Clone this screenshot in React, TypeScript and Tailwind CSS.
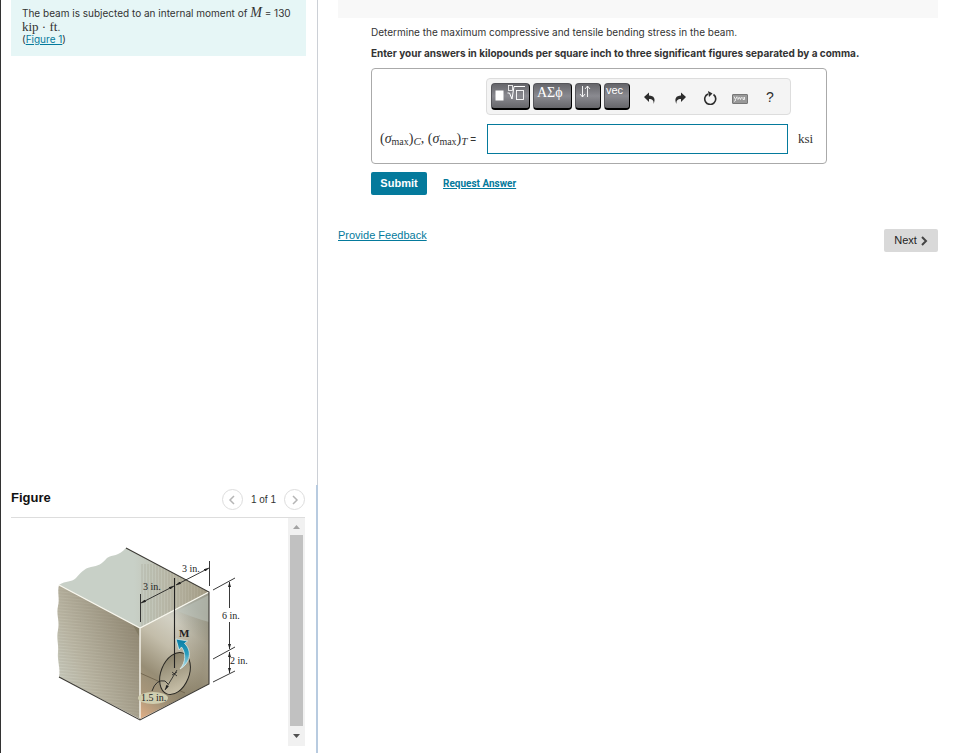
import React from 'react';

const keyClass =
  'flex h-[27px] items-start justify-start rounded-[4px] border border-[#55555a] border-r-black border-b-2 border-b-black bg-linear-to-b from-[#66666b] via-[#8a8a90] to-[#66666a] text-white overflow-hidden';

const toolClass = 'flex h-[30px] w-[30px] items-center justify-center text-[#2d2d2d]';

const BeamFigure = () => (
  <svg
    viewBox="46 540 214 190"
    className="h-[190px] w-[214px]"
    role="img"
    aria-label="Beam cross section"
    fontFamily="'Liberation Serif', serif"
    fontSize="10"
    fill="#222"
  >
    <defs>
      <linearGradient id="side" x1="0" y1="1" x2="1" y2="0.3">
        <stop offset="0" stopColor="#d3d9d0" />
        <stop offset="0.4" stopColor="#bdb9a7" />
        <stop offset="1" stopColor="#918873" />
      </linearGradient>
      <linearGradient id="front" x1="0.1" y1="1" x2="0.5" y2="0">
        <stop offset="0" stopColor="#d9ab84" />
        <stop offset="0.16" stopColor="#a8967a" />
        <stop offset="0.34" stopColor="#978d75" />
        <stop offset="0.6" stopColor="#c3bdaa" />
        <stop offset="0.8" stopColor="#d2d0c3" />
        <stop offset="1" stopColor="#b4bab2" />
      </linearGradient>
      <linearGradient id="frontShade" x1="0" y1="0" x2="1" y2="0.3">
        <stop offset="0.5" stopColor="#746a51" stopOpacity="0" />
        <stop offset="1" stopColor="#746a51" stopOpacity="0.5" />
      </linearGradient>
      <linearGradient id="top" x1="0" y1="0" x2="1" y2="0">
        <stop offset="0.5" stopColor="#c8d0c7" />
        <stop offset="0.78" stopColor="#bbb9a8" />
        <stop offset="1" stopColor="#a69e87" />
      </linearGradient>
      <linearGradient id="hole" x1="0" y1="0" x2="0.6" y2="1">
        <stop offset="0" stopColor="#7d765f" />
        <stop offset="1" stopColor="#c8c0a9" />
      </linearGradient>
      <linearGradient id="moment" x1="0" y1="0" x2="0" y2="1">
        <stop offset="0" stopColor="#087ba3" />
        <stop offset="0.5" stopColor="#2a9dbd" />
        <stop offset="1" stopColor="#c8e8ec" />
      </linearGradient>
      <pattern id="grain" width="8" height="3" patternUnits="userSpaceOnUse" patternTransform="rotate(5)">
        <path d="M0 1h8" stroke="#6f684f" strokeWidth="0.6" opacity="0.35" />
      </pattern>
      <pattern id="lines" width="3" height="8" patternUnits="userSpaceOnUse">
        <path d="M1 0v8" stroke="#7b745b" strokeWidth="0.6" opacity="0.4" />
      </pattern>
      <marker id="arrow" markerWidth="5" markerHeight="3" refX="5" refY="1.5" orient="auto-start-reverse" markerUnits="userSpaceOnUse">
        <path d="M0 0l5 1.500-5 1.500z" fill="#222" />
      </marker>
    </defs>

    {/* top face with the broken back edge */}
    <path
      d="M59 585C66 580 71 583 76 578C83 570 86 568 91 567C98 566 102 564 107 558C113 554 118 557 126 548L209 592L140 628Z"
      fill="url(#top)"
    />
    <path d="M140 564L157 564L209 592L140 628Z" fill="url(#lines)" />
    {/* side face */}
    <path d="M59 585C57 592 60 599 58 606C56 615 60 621 58 630C56 638 59 645 58 652C57 661 61 669 59 677L140 719V628Z" fill="url(#side)" />
    <path d="M59 585C57 592 60 599 58 606C56 615 60 621 58 630L59 677L140 719V628Z" fill="url(#grain)" />
    <path d="M133 625L140 638V628Z" fill="#827b64" />
    {/* front face */}
    <path d="M140 628L209 592V684L140 719Z" fill="url(#front)" />
    <path d="M140 628L209 592V684L140 719Z" fill="url(#frontShade)" />
    <path d="M177 611L209 595V622Q194 618 177 611" fill="#bdc5be" opacity="0.5" />
    <path d="M140 673L185 693" stroke="#6b6049" strokeWidth="0.8" fill="none" />
    <path d="M59 585L140 628L209 592M140 628V718" stroke="#f8f7ee" strokeWidth="1.4" fill="none" />
    <path d="M59 677L140 720L209 684V592L126 548" stroke="#3c3a35" strokeWidth="1.1" fill="none" />

    {/* hole */}
    <ellipse cx="175" cy="673.5" rx="14" ry="22" transform="rotate(22 175 673.5)" fill="url(#hole)" stroke="#292823" strokeWidth="1" />
    <path d="M174.500 578V668" stroke="#222" strokeWidth="1.1" />
    <path d="M165 690L177 670" stroke="#222" strokeWidth="0.8" markerStart="url(#arrow)" />
    <path d="M172 672l5 4M172 675l5-3" stroke="#222" strokeWidth="0.8" />
    <ellipse cx="153" cy="698" rx="15" ry="6" fill="#d0ceb0" />
    <path d="M152 691Q156 679 165 681L168 684" stroke="#222" strokeWidth="0.9" fill="none" />

    {/* dimensions */}
    <g stroke="#222" strokeWidth="0.9" fill="none">
      <path d="M140.500 594V622M209.500 561V586" />
      <path d="M141 603L174 586" markerStart="url(#arrow)" markerEnd="url(#arrow)" />
      <path d="M176 585L209 568" markerStart="url(#arrow)" markerEnd="url(#arrow)" />
      <path d="M213 590L235 578M213 659L235 647M213 682L235 671" />
      <path d="M229.500 608V582" markerEnd="url(#arrow)" />
      <path d="M229.500 622V649" markerEnd="url(#arrow)" />
      <path d="M229.500 652V673" markerStart="url(#arrow)" markerEnd="url(#arrow)" />
    </g>
    <path
      d="M180 669C191 663 192 650 184.500 643.500L187.500 641L176 639L179 650L181.500 647C186 653 186 662 180 669Z"
      fill="url(#moment)"
      stroke="#e5f1ef"
      strokeWidth="0.7"
    />
    <text x="143" y="590">3 in.</text>
    <text x="182" y="572">3 in.</text>
    <text x="222" y="619">6 in.</text>
    <text x="230" y="664">2 in.</text>
    <text x="141" y="701">1.5 in.</text>
    <text x="179" y="637" fontSize="11" fontWeight="bold">M</text>
  </svg>
);

const ProblemPanel = () => (
  <aside className="flex w-[318px] shrink-0 flex-col border-l border-[#333]">
    <section className="flex-1 border-r border-[#ccd0d6] pl-[10px] pr-[11px]">
      <div className="h-[56px] bg-[#e6f6f6] px-[11px] pt-[6px] font-['Inter',sans-serif] text-[10px] leading-[12px] text-[#333]">
        <p>
          The beam is subjected to an internal moment of{' '}
          <i className="font-['Liberation_Serif',serif] text-[14px] leading-none">M</i> = 130
        </p>
        <p>
          <span className="font-['Liberation_Serif',serif] text-[13px] leading-none">kip · ft</span>.
        </p>
        <p>
          (<a href="#figure" className="text-[#047a9c] underline">Figure 1</a>)
        </p>
      </div>
    </section>

    <section id="figure" className="border-r-2 border-[#b8cbe0] pb-[7px] pl-[10px] pr-[11px]">
      <header className="flex h-[33px] items-start justify-between border-b border-[#ddd] pt-[4px]">
        <h2 className="text-[13px] font-bold leading-[18px] text-[#111]">Figure</h2>
        <div className="flex items-center gap-[8px] text-[10px] text-[#333]">
          <button aria-label="Previous figure" className="flex size-[21px] items-center justify-center rounded-full border border-[#ddd]">
            <svg viewBox="0 0 10 10" className="size-[10px]" fill="none" stroke="#b5b5b5" strokeWidth="1.5"><path d="M7 1L3 5l4 4" /></svg>
          </button>
          <span>1 of 1</span>
          <button aria-label="Next figure" className="flex size-[21px] items-center justify-center rounded-full border border-[#ddd]">
            <svg viewBox="0 0 10 10" className="size-[10px]" fill="none" stroke="#b5b5b5" strokeWidth="1.5"><path d="M3 1l4 4-4 4" /></svg>
          </button>
        </div>
      </header>
      <div className="flex h-[228px] justify-between">
        <div className="pl-[35px] pt-[22px]">
          <BeamFigure />
        </div>
        <div className="flex w-[17px] shrink-0 flex-col items-center bg-[#f1f1f1]">
          <button aria-label="Scroll up" className="flex h-[17px] w-full items-center justify-center">
            <svg viewBox="0 0 7 4" className="h-[4px] w-[7px]" fill="#a3a3a3"><path d="M0 4l3.500-4L7 4z" /></svg>
          </button>
          <div className="w-[13px] flex-1 bg-[#c1c1c1]" />
          <button aria-label="Scroll down" className="flex h-[20px] w-full items-center justify-center">
            <svg viewBox="0 0 7 4" className="h-[4px] w-[7px]" fill="#505050"><path d="M0 0h7L3.500 4z" /></svg>
          </button>
        </div>
      </div>
    </section>
  </aside>
);

const Toolbar = () => (
  <div className="flex h-[37px] items-center gap-[3px] rounded-[4px] border border-[#ddd] bg-[#f4f4f4] pl-[4px]">
    <button aria-label="Templates" className={`${keyClass} w-[39px]`}>
      <svg viewBox="0 0 37 24" className="h-[24px] w-[37px]" fill="none" stroke="#fff">
        <rect x="4" y="7" width="7" height="9" fill="#fff" />
        <path d="M15.500 9l2 0 2.500 6L22 2.500H33" />
        <rect x="16.500" y="1.500" width="4" height="5" strokeWidth="0.8" />
        <rect x="24.500" y="6.500" width="7" height="9" strokeWidth="0.9" />
      </svg>
    </button>
    <button className={`${keyClass} w-[39px] pl-[3px] font-['Liberation_Serif',serif] text-[14px] leading-[17px]`}>ΑΣϕ</button>
    <button aria-label="Arrows" className={`${keyClass} w-[26px]`}>
      <svg viewBox="0 0 24 24" className="size-[24px]" fill="none" stroke="#fff" strokeWidth="0.9">
        <path d="M6.500 2v11M4 10l2.500 3L9 10M11.500 13V2M9 5l2.500-3L14 5" />
      </svg>
    </button>
    <button className={`${keyClass} w-[26px] pl-px text-[11px] leading-[13px]`}>vec</button>
    <div className="flex pl-[2px] pt-[2px]">
      <button aria-label="Undo" className={toolClass}>
        <svg viewBox="0 0 12 12" className="size-[12px]" fill="currentColor"><path d="M0 5L5 .5V3.500C10 3.500 12 7 9.500 12C10 8.500 8.500 7 5 7v3z" /></svg>
      </button>
      <button aria-label="Redo" className={toolClass}>
        <svg viewBox="0 0 12 12" className="size-[12px]" fill="currentColor"><path d="M12 5L7 .5V3.500C2 3.500 0 7 2.500 12C2 8.500 3.500 7 7 7v3z" /></svg>
      </button>
      <button aria-label="Reset" className={toolClass}>
        <svg viewBox="0 0 14 14" className="size-[14px]" fill="none" stroke="currentColor" strokeWidth="1.6">
          <path d="M10.500 3.500A5.500 5.500 0 1 1 5 2.900" />
          <path d="M5 0l4.500 2.500L6 6z" fill="currentColor" stroke="none" />
        </svg>
      </button>
      <button aria-label="Keyboard shortcuts" className={toolClass}>
        <svg viewBox="0 0 16 10" className="mt-[3px] h-[10px] w-[16px]">
          <rect x="0.500" y="0.500" width="15" height="9" rx="0.5" fill="#999" stroke="#777" />
          <path d="M2 2.500l1.500 3 1.500-3M6 3v2.500l1.500-2 1 2 1-2.500M11 3v2.500h1.500V3M2 7.500l2-1.500" stroke="#f4f4f4" strokeWidth="0.9" fill="none" />
        </svg>
      </button>
      <button aria-label="Help" className={`${toolClass} text-[14px]`}>?</button>
    </div>
  </div>
);

const SigmaMax = ({ sub }: { sub: string }) => (
  <>
    (<i>σ</i>
    <sub className="text-[10px]">max</sub>)<sub className="text-[11px] italic">{sub}</sub>
  </>
);

const AnswerPanel = () => (
  <main className="min-w-0 flex-1 pl-[20px] pr-[17px]">
    <div className="h-[18px] bg-[#f8f8f8]" />
    <form className="pl-[33px] text-[10px] text-[#333]" onSubmit={(e) => e.preventDefault()}>
      <div className="font-['Inter',sans-serif] leading-[13px]">
        <p className="pt-[8px]">Determine the maximum compressive and tensile bending stress in the beam.</p>
        <p className="pt-[8px] font-bold">
          Enter your answers in kilopounds per square inch to three significant figures separated by a comma.
        </p>
      </div>
      <div className="mt-[8px] grid max-w-[456px] grid-cols-[114px_1fr_35px] items-center gap-y-[9px] rounded-[4px] border border-[#aaa] py-[9px]">
        <div className="col-start-2">
          <Toolbar />
        </div>
        <label htmlFor="answer" className="col-start-1 whitespace-nowrap pl-[8px] font-['Liberation_Serif',serif] text-[14px] leading-[16px]">
          <SigmaMax sub="C" />, <SigmaMax sub="T" />
          <span className="font-['Liberation_Sans',sans-serif] text-[10px]"> =</span>
        </label>
        <div className="pl-px pr-[3px]">
          <input id="answer" type="text" className="block h-[30px] w-full border border-[#047a9c] bg-white px-2 outline-none" />
        </div>
        <span className="pl-[7px] font-['Liberation_Serif',serif] text-[13px]">ksi</span>
      </div>
      <div className="flex items-center gap-[16px] pt-[8px]">
        <button type="submit" className="h-[23px] w-[56px] rounded-[2px] bg-[#047a9c] text-[11px] font-bold text-white">Submit</button>
        <a href="#answer" className="font-['Roboto',sans-serif] font-bold text-[#047a9c] underline">Request Answer</a>
      </div>
    </form>
    <div className="flex items-start justify-between pt-[34px]">
      <a href="#feedback" className="text-[11px] leading-[13px] text-[#047a9c] underline">Provide Feedback</a>
      <button className="flex h-[23px] w-[54px] items-center justify-center gap-[3px] rounded-[2px] bg-[#d9d9d9] text-[11px] text-[#222]">
        Next
        <svg viewBox="0 0 8 10" className="h-[10px] w-[8px]" fill="none" stroke="#444" strokeWidth="2"><path d="M2 1l4 4-4 4" /></svg>
      </button>
    </div>
  </main>
);

const App = () => {
  return (
    <div className="flex min-h-screen bg-white font-['Liberation_Sans',sans-serif]">
      <ProblemPanel />
      <AnswerPanel />
    </div>
  );
};

export default App;
